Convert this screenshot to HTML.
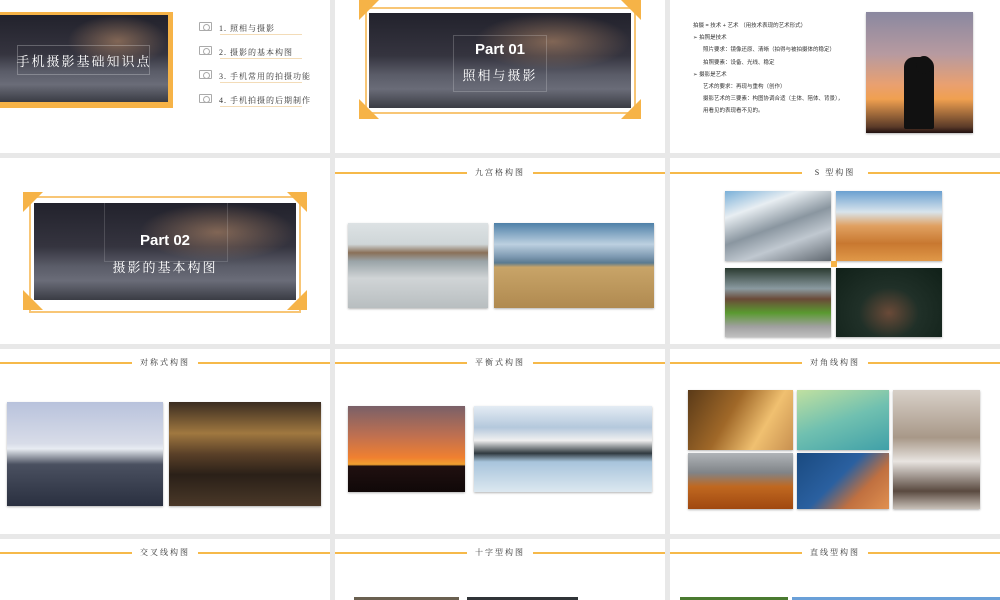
<!DOCTYPE html>
<html><head><meta charset="utf-8"><style>
*{margin:0;padding:0;box-sizing:border-box}
body{width:1000px;height:600px;background:#e8e8e8;position:relative;overflow:hidden;font-family:"Liberation Sans","Noto Sans CJK SC",sans-serif}
.s{position:absolute;background:#fff;overflow:hidden}
.a{position:absolute}
.hl{position:absolute;height:2px;background:#f6b94a}
.ht{position:absolute;font-size:8px;color:#333;letter-spacing:2px;text-align:center;width:80px;font-family:"Liberation Serif","Noto Serif CJK SC",serif}
.street{background:radial-gradient(ellipse at 70% 30%,rgba(230,170,120,.45),transparent 30%),linear-gradient(180deg,#22222c 0%,#35343f 45%,#5a5c68 65%,#6a6c78 80%,#3a3c44 100%)}
.ph{position:absolute;box-shadow:0 1px 2px rgba(0,0,0,.3)}
.tri{position:absolute;width:0;height:0}
.cam{position:absolute;width:13px;height:9px;border:1px solid #aaa;border-radius:1px}
.cam:after{content:"";position:absolute;left:3px;top:1px;width:5px;height:5px;border:1px solid #aaa;border-radius:50%}
.li{position:absolute;left:219px;font-size:8px;color:#333;font-family:'Liberation Serif','Noto Serif CJK SC',serif;letter-spacing:1px}
.ul{position:absolute;left:220px;width:82px;height:1px;background:#f3dcb8}
</style></head><body>

<!-- row1 col1 -->
<div class="s" style="left:0;top:0;width:330px;height:153px">
 <div class="a" style="left:0;top:12px;width:173px;height:96px;background:#f6b347"></div>
 <div class="a street" style="left:0;top:15px;width:168px;height:87px"></div>
 <div class="a" style="left:17px;top:45px;width:133px;height:30px;border:1px solid rgba(255,255,255,.25)"></div>
 <div class="a" style="left:0;top:51px;width:168px;text-align:center;color:#fff;font-size:13px;letter-spacing:2px;font-family:'Liberation Serif','Noto Serif CJK SC',serif">手机摄影基础知识点</div>
 <div class="cam" style="left:199px;top:22px"></div>
 <div class="cam" style="left:199px;top:46px"></div>
 <div class="cam" style="left:199px;top:70px"></div>
 <div class="cam" style="left:199px;top:94px"></div>
 <div class="li" style="top:23px">1. 照相与摄影</div>
 <div class="li" style="top:47px">2. 摄影的基本构图</div>
 <div class="li" style="top:71px">3. 手机常用的拍摄功能</div>
 <div class="li" style="top:95px">4. 手机拍摄的后期制作</div>
 <div class="ul" style="top:34px"></div>
 <div class="ul" style="top:58px"></div>
 <div class="ul" style="top:82px"></div>
 <div class="ul" style="top:106px"></div>
</div>

<!-- row1 col2 -->
<div class="s" style="left:335px;top:0;width:330px;height:153px">
 <div class="a" style="left:30px;top:7px;width:271px;height:107px;border:2px solid #f8c676"></div>
 <div class="a street" style="left:34px;top:13px;width:262px;height:95px"></div>
 <div class="a" style="left:118px;top:35px;width:94px;height:57px;border:1px solid rgba(255,255,255,.2)"></div>
 <div class="a" style="left:34px;top:41px;width:262px;text-align:center;color:#fff;font-weight:bold;font-size:15px">Part 01</div>
 <div class="a" style="left:34px;top:65px;width:262px;text-align:center;color:#fff;font-size:13px;letter-spacing:2px;font-family:'Liberation Serif','Noto Serif CJK SC',serif">照相与摄影</div>
 <div class="tri" style="left:24px;top:0;border-top:20px solid #f6b347;border-right:20px solid transparent"></div>
 <div class="tri" style="left:286px;top:0;border-top:20px solid #f6b347;border-left:20px solid transparent"></div>
 <div class="tri" style="left:24px;top:99px;border-bottom:20px solid #f6b347;border-right:20px solid transparent"></div>
 <div class="tri" style="left:286px;top:99px;border-bottom:20px solid #f6b347;border-left:20px solid transparent"></div>
</div>

<!-- row1 col3 -->
<div class="s" style="left:670px;top:0;width:330px;height:153px">
 <div class="a" style="left:23px;top:20px;font-size:5.5px;color:#333;line-height:12.2px">
  <div>拍摄 = 技术 + 艺术 （用技术表现的艺术形式）</div>
  <div>➢ 拍照是技术</div>
  <div style="padding-left:10px">照片要求：镜像还原、清晰（拍得与被拍摄体的稳定）</div>
  <div style="padding-left:10px">拍照要素：设备、光线、稳定</div>
  <div>➢ 摄影是艺术</div>
  <div style="padding-left:10px">艺术的要求：再现与重构（创作）</div>
  <div style="padding-left:10px">摄影艺术的三要素：构图协调合适（主体、陪体、背景），</div>
  <div style="padding-left:10px">用看见的表现看不见的。</div>
 </div>
 <div class="ph" style="left:196px;top:12px;width:107px;height:121px;background:linear-gradient(180deg,#8a88a0 0%,#b79aa0 35%,#e9a070 60%,#f0a050 72%,#5a3a28 95%,#201010 100%)">
  <div class="a" style="left:38px;top:45px;width:30px;height:72px;background:#111;border-radius:10px 10px 2px 2px"></div>
  <div class="a" style="left:50px;top:44px;width:16px;height:18px;background:#111;border-radius:50%"></div>
 </div>
</div>

<!-- row2 col1 -->
<div class="s" style="left:0;top:158px;width:330px;height:186px">
 <div class="a" style="left:29px;top:38px;width:272px;height:117px;border:2px solid #f8c676"></div>
 <div class="a street" style="left:34px;top:45px;width:262px;height:97px"></div>
 <div class="a" style="left:104px;top:44px;width:124px;height:60px;border:1px solid rgba(255,255,255,.15)"></div>
 <div class="a" style="left:34px;top:74px;width:262px;text-align:center;color:#fff;font-weight:bold;font-size:15px">Part 02</div>
 <div class="a" style="left:34px;top:99px;width:262px;text-align:center;color:#fff;font-size:13px;letter-spacing:2px;font-family:'Liberation Serif','Noto Serif CJK SC',serif">摄影的基本构图</div>
 <div class="tri" style="left:23px;top:34px;border-top:20px solid #f6b347;border-right:20px solid transparent"></div>
 <div class="tri" style="left:287px;top:34px;border-top:20px solid #f6b347;border-left:20px solid transparent"></div>
 <div class="tri" style="left:23px;top:132px;border-bottom:20px solid #f6b347;border-right:20px solid transparent"></div>
 <div class="tri" style="left:287px;top:132px;border-bottom:20px solid #f6b347;border-left:20px solid transparent"></div>
</div>

<!-- row2 col2 -->
<div class="s" style="left:335px;top:158px;width:330px;height:186px">
 <div class="hl" style="left:0;top:14px;width:132px"></div><div class="hl" style="left:198px;top:14px;width:132px"></div>
 <div class="ht" style="left:125px;top:9px">九宫格构图</div>
 <div class="ph" style="left:13px;top:65px;width:140px;height:85px;background:linear-gradient(180deg,#dde2e4 0%,#cfd6d8 25%,#8a7058 35%,#9aa4a8 45%,#d0d4d6 65%,#b8bec0 100%)"></div>
 <div class="ph" style="left:159px;top:65px;width:160px;height:85px;background:linear-gradient(180deg,#4e80a8 0%,#bcd0e0 25%,#7c98b0 40%,#5a7a90 47%,#c8a468 52%,#b08a50 100%)"></div>
</div>

<!-- row2 col3 -->
<div class="s" style="left:670px;top:158px;width:330px;height:186px">
 <div class="hl" style="left:0;top:14px;width:132px"></div><div class="hl" style="left:198px;top:14px;width:132px"></div>
 <div class="ht" style="left:125px;top:9px">S 型构图</div>
 <div class="ph" style="left:55px;top:33px;width:106px;height:70px;background:linear-gradient(160deg,#7ab0d8 0%,#e8eef2 25%,#8a96a0 50%,#c0c8d0 70%,#606870 100%)"></div>
 <div class="ph" style="left:166px;top:33px;width:106px;height:70px;background:linear-gradient(180deg,#6aa0d0 0%,#d8e4ec 30%,#e0a060 50%,#c87830 75%,#e09848 100%)"></div>
 <div class="ph" style="left:55px;top:110px;width:106px;height:69px;background:linear-gradient(180deg,#2a3a30 0%,#8a9aa0 30%,#6a4a38 45%,#5a9a30 65%,#a0a0a0 85%,#c0c0c0 100%)"></div>
 <div class="ph" style="left:166px;top:110px;width:106px;height:69px;background:radial-gradient(ellipse at 50% 65%,#6a4a38 0%,#203028 40%,#102018 100%)"></div>
 <div class="a" style="left:161px;top:103px;width:6px;height:6px;background:#f6b347"></div>
</div>

<!-- row3 col1 -->
<div class="s" style="left:0;top:349px;width:330px;height:185px">
 <div class="hl" style="left:0;top:13px;width:132px"></div><div class="hl" style="left:198px;top:13px;width:132px"></div>
 <div class="ht" style="left:125px;top:8px">对称式构图</div>
 <div class="ph" style="left:7px;top:53px;width:156px;height:104px;background:linear-gradient(180deg,#b8c2dc 0%,#d8dce8 40%,#e8ecf2 45%,#4a5060 60%,#2a3040 100%)"></div>
 <div class="ph" style="left:169px;top:53px;width:152px;height:104px;background:linear-gradient(180deg,#3a2c20 0%,#a07840 30%,#5a4028 50%,#2a2018 70%,#4a3828 100%)"></div>
</div>

<!-- row3 col2 -->
<div class="s" style="left:335px;top:349px;width:330px;height:185px">
 <div class="hl" style="left:0;top:13px;width:132px"></div><div class="hl" style="left:198px;top:13px;width:132px"></div>
 <div class="ht" style="left:125px;top:8px">平衡式构图</div>
 <div class="ph" style="left:13px;top:57px;width:117px;height:86px;background:linear-gradient(180deg,#7a6068 0%,#c07050 35%,#f08030 60%,#f0a030 68%,#201010 70%,#100808 100%)"></div>
 <div class="ph" style="left:139px;top:57px;width:178px;height:86px;background:linear-gradient(180deg,#e4ecf4 0%,#b4c8dc 25%,#f0f0f0 40%,#303a40 55%,#a8c4dc 65%,#dce8f0 100%)"></div>
</div>

<!-- row3 col3 -->
<div class="s" style="left:670px;top:349px;width:330px;height:185px">
 <div class="hl" style="left:0;top:13px;width:132px"></div><div class="hl" style="left:198px;top:13px;width:132px"></div>
 <div class="ht" style="left:125px;top:8px">对角线构图</div>
 <div class="ph" style="left:18px;top:41px;width:105px;height:60px;background:linear-gradient(120deg,#5a3a18 0%,#a06828 40%,#f0c070 70%,#c89050 100%)"></div>
 <div class="ph" style="left:127px;top:41px;width:92px;height:60px;background:linear-gradient(160deg,#c0e0a0 0%,#70c0b0 50%,#40a0a8 100%)"></div>
 <div class="ph" style="left:18px;top:104px;width:105px;height:56px;background:linear-gradient(180deg,#b0b4b8 0%,#808488 35%,#c06820 60%,#a04810 100%)"></div>
 <div class="ph" style="left:127px;top:104px;width:92px;height:56px;background:linear-gradient(135deg,#1a4a80 0%,#2a60a0 45%,#c07040 70%,#e09050 100%)"></div>
 <div class="ph" style="left:223px;top:41px;width:87px;height:119px;background:linear-gradient(180deg,#d8d0c8 0%,#a89888 40%,#e8e4e0 60%,#5a4a40 85%,#c8c0b8 100%)"></div>
</div>

<!-- row4 -->
<div class="s" style="left:0;top:539px;width:330px;height:61px">
 <div class="hl" style="left:0;top:13px;width:132px"></div><div class="hl" style="left:198px;top:13px;width:132px"></div>
 <div class="ht" style="left:125px;top:8px">交叉线构图</div>
</div>
<div class="s" style="left:335px;top:539px;width:330px;height:61px">
 <div class="hl" style="left:0;top:13px;width:132px"></div><div class="hl" style="left:198px;top:13px;width:132px"></div>
 <div class="ht" style="left:125px;top:8px">十字型构图</div>
 <div class="a" style="left:19px;top:58px;width:105px;height:3px;background:#6a6050"></div>
 <div class="a" style="left:132px;top:58px;width:111px;height:3px;background:#303438"></div>
</div>
<div class="s" style="left:670px;top:539px;width:330px;height:61px">
 <div class="hl" style="left:0;top:13px;width:132px"></div><div class="hl" style="left:198px;top:13px;width:132px"></div>
 <div class="ht" style="left:125px;top:8px">直线型构图</div>
 <div class="a" style="left:10px;top:58px;width:108px;height:3px;background:#4a7a30"></div>
 <div class="a" style="left:122px;top:58px;width:208px;height:3px;background:#6aa0d8"></div>
</div>

</body></html>
